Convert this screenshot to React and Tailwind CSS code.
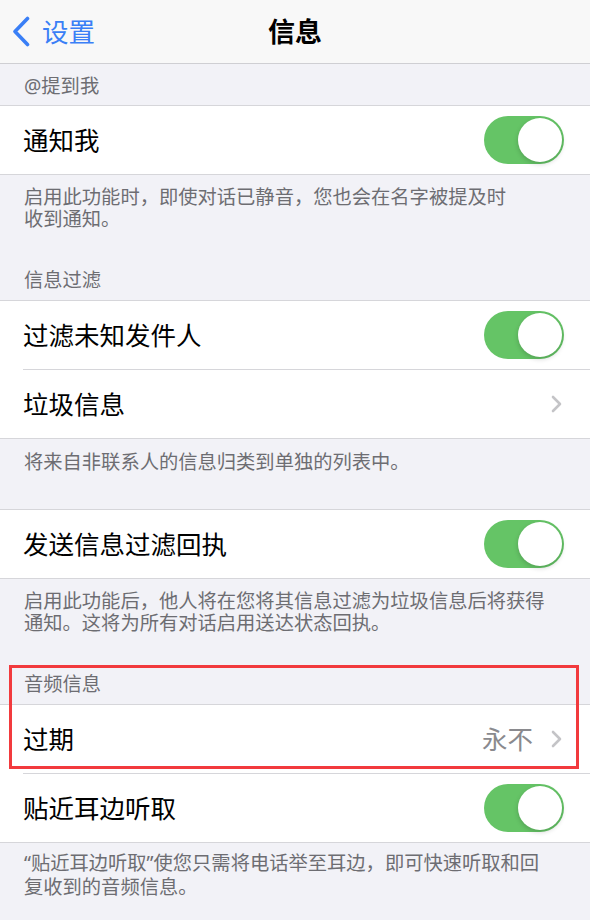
import React from "react";

const font = "font-['Noto_Sans','Noto_Sans_CJK_SC',sans-serif]";

function Toggle() {
    return (
        <div className="w-[80px] h-[48px] rounded-full bg-[#65c466] p-[2px] flex justify-end">
            <div className="w-[44px] h-[44px] rounded-full bg-white shadow-[0_2px_5px_rgba(0,0,0,0.18)]" />
        </div>
    );
}

function Chevron() {
    return (
        <svg width="11" height="18" viewBox="0 0 11 18" className="mr-[2px]">
            <path
                d="M2 2 L9 9 L2 16"
                fill="none"
                stroke="#c4c4c7"
                strokeWidth="2.6"
                strokeLinecap="round"
                strokeLinejoin="round"
            />
        </svg>
    );
}

function Row({ label, toggle, value, chevron, last }) {
    return (
        <div className="pl-[23px] bg-white">
            <div
                className={`flex items-center h-[68px] pr-[26px] ${
                    last ? "" : "border-b border-[#d6d6da] h-[69px]"
                }`}
            >
                <span className="flex-1 text-[25.5px] leading-[30px] text-black">
                    {label}
                </span>
                {value && (
                    <span className="text-[25.5px] leading-[30px] text-[#8a8a8e] mr-[18px]">
                        {value}
                    </span>
                )}
                {toggle && <Toggle />}
                {chevron && <Chevron />}
            </div>
        </div>
    );
}

function Group({ children }) {
    return (
        <div className="border-y border-[#d6d6da] bg-white">{children}</div>
    );
}

function Header({ children, className = "" }) {
    return (
        <div
            className={`px-[24px] text-[19.3px] leading-[22px] text-[#6d6d72] ${className}`}
        >
            {children}
        </div>
    );
}

function Footer({ children, className = "" }) {
    return (
        <div
            className={`px-[24px] text-[19.3px] text-[#6d6d72] whitespace-nowrap ${className}`}
        >
            {children}
        </div>
    );
}

export default function App() {
    return (
        <div className={`relative w-full min-h-[920px] bg-[#f2f2f7] overflow-hidden ${font}`}>
            <div className="relative h-[64px] bg-[#f8f8f8] border-b border-[#cfcfd3] flex items-center">
                <div className="flex items-center pl-[12px] text-[#3a7ff6]">
                    <svg width="18" height="31" viewBox="0 0 18 31">
                        <path
                            d="M15.5 2.5 L3 15.5 L15.5 28.5"
                            fill="none"
                            stroke="#3a7ff6"
                            strokeWidth="3.6"
                            strokeLinecap="round"
                            strokeLinejoin="round"
                        />
                    </svg>
                    <span className="ml-[12px] text-[26.5px] leading-[32px]">
                        设置
                    </span>
                </div>
                <div className="absolute inset-x-0 top-0 h-[63px] flex items-center justify-center pointer-events-none">
                    <span className="text-[27px] leading-[32px] font-semibold text-black">
                        信息
                    </span>
                </div>
            </div>

            <Header className="pt-[10.5px] pb-[8.5px]">@提到我</Header>
            <Group>
                <Row label="通知我" toggle last />
            </Group>
            <Footer className="pt-[10.5px] pb-[20px] leading-[22px]">
                启用此功能时，即使对话已静音，您也会在名字被提及时
                <br />
                收到通知。
            </Footer>

            <Header className="pt-[19.5px] pb-[9px]">信息过滤</Header>
            <Group>
                <Row label="过滤未知发件人" toggle />
                <Row label="垃圾信息" chevron last />
            </Group>
            <Footer className="pt-[12px] pb-[20px] leading-[22px]">
                将来自非联系人的信息归类到单独的列表中。
            </Footer>

            <div className="pt-[16px]">
                <Group>
                    <Row label="发送信息过滤回执" toggle last />
                </Group>
            </div>
            <Footer className="pt-[10.5px] pb-[20px] leading-[22px]">
                启用此功能后，他人将在您将其信息过滤为垃圾信息后将获得
                <br />
                通知。这将为所有对话启用送达状态回执。
            </Footer>

            <Header className="pt-[19.5px] pb-[9px]">音频信息</Header>
            <Group>
                <Row label="过期" value="永不" chevron />
                <Row label="贴近耳边听取" toggle last />
            </Group>
            <Footer className="pt-[8px] pb-[20px] leading-[24px]">
                “贴近耳边听取”使您只需将电话举至耳边，即可快速听取和回
                <br />
                复收到的音频信息。
            </Footer>

            <div className="absolute left-[9px] top-[665px] w-[570px] h-[104px] border-[3px] border-[#f23a3d] pointer-events-none" />
        </div>
    );
}
